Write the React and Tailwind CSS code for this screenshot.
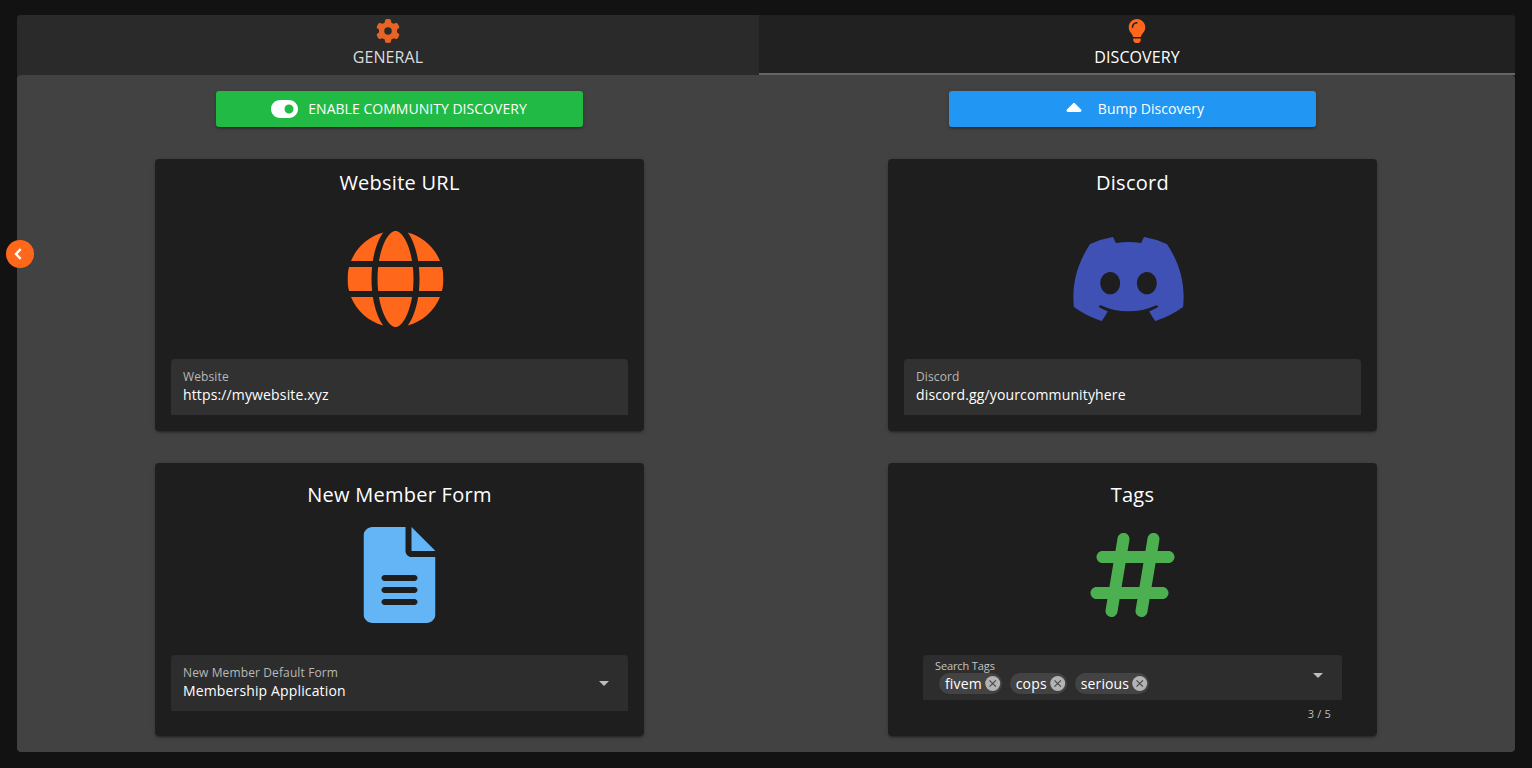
import {
  FaGear,
  FaToggleOn,
  FaCaretUp,
  FaDiscord,
  FaHashtag,
} from "react-icons/fa6";

const CARD_SHADOW =
  "shadow-[0_3px_1px_-2px_rgba(0,0,0,0.2),0_2px_2px_0_rgba(0,0,0,0.14),0_1px_5px_0_rgba(0,0,0,0.12)]";

function Globe() {
  return (
    <svg viewBox="0 0 512 512" className="size-24 -translate-x-[0.5px]" fill="currentColor">
      <path d="M352 256c0 22.200-1.200 43.600-3.300 64H163.300c-2.200-20.400-3.300-41.800-3.300-64s1.200-43.600 3.300-64h185.400c2.200 20.400 3.300 41.800 3.300 64zm28.800-64h123.100c5.300 20.500 8.100 41.900 8.100 64s-2.800 43.500-8.100 64H380.800c2.100-20.600 3.200-42 3.200-64s-1.100-43.400-3.200-64zm112.600-32H376.700c-10-63.900-29.800-117.400-55.300-151.600 78.300 20.700 142 77.500 171.900 151.600zm-149.100 0H167.700c6.100-36.400 15.500-68.600 27-94.700 10.500-23.600 22.200-40.700 33.500-51.500C239.400 3.200 248.700 0 256 0s16.600 3.200 27.800 13.800c11.300 10.800 23 27.900 33.500 51.500 11.600 26 20.900 58.200 27 94.700zm-209 0H18.600C48.600 85.900 112.200 29.100 190.600 8.400 165.100 42.600 145.300 96.100 135.300 160zM8.100 192h123.100c-2.100 20.600-3.200 42-3.200 64s1.100 43.400 3.200 64H8.100C2.800 299.500 0 278.100 0 256s2.800-43.500 8.100-64zm186.600 254.600c-11.600-26-20.900-58.200-27-94.600h176.600c-6.100 36.400-15.500 68.600-27 94.600-10.500 23.600-22.200 40.700-33.500 51.500C272.600 508.800 263.300 512 256 512s-16.600-3.200-27.800-13.800c-11.300-10.800-23-27.900-33.500-51.500zM135.300 352c10 63.900 29.800 117.400 55.300 151.600C112.200 482.900 48.600 426.100 18.600 352h116.700zm358.100 0c-30 74.100-93.600 130.900-171.900 151.600 25.500-34.200 45.200-87.700 55.300-151.600h116.600z" />
    </svg>
  );
}

function FileLines() {
  return (
    <svg viewBox="0 0 384 512" className="h-24 w-[72px] -translate-x-[0.5px]" fill="currentColor">
      <path
        fillRule="evenodd"
        d="M256 0v128h128L256 0zM224 128V0H48C21.490 0 0 21.490 0 48v416c0 26.500 21.490 48 48 48h288c26.510 0 48-21.490 48-48V160H256c-17.700 0-32-14.300-32-32zM272 416H112c-8.800 0-16-7.200-16-16s7.200-16 16-16h160c8.800 0 16 7.200 16 16s-7.200 16-16 16zM272 352H112c-8.800 0-16-7.200-16-16s7.200-16 16-16h160c8.800 0 16 7.200 16 16s-7.200 16-16 16zM288 272c0 8.800-7.200 16-16 16H112c-8.800 0-16-7.200-16-16s7.200-16 16-16h160c8.800 0 16 7.200 16 16z"
      />
    </svg>
  );
}

function Lightbulb() {
  return (
    <svg viewBox="0 0 384 512" className="h-6 w-[18px]" fill="#ff671b">
      <path d="M112.1 454.3c0 6.297 1.816 12.44 5.284 17.69l17.14 25.69c5.25 7.875 17.17 14.28 26.64 14.28h61.67c9.438 0 21.36-6.401 26.61-14.28l17.08-25.68c2.938-4.438 5.348-12.37 5.348-17.7L272 415.1h-160L112.1 454.3zM191.4 .0132C89.44 .3257 16 82.97 16 175.1c0 44.38 16.44 84.84 43.56 115.8c16.53 18.84 42.34 58.23 52.22 91.45c.0313 .25 .0938 .5166 .125 .7823h160.2c.0313-.2656 .0938-.5166 .125-.7823c9.875-33.22 35.69-72.61 52.22-91.45C351.6 260.8 368 220.4 368 175.1C368 78.61 288.9-.2837 191.4 .0132zM192 96.01c-44.13 0-79.1 35.89-79.1 79.1C112 184.8 104.8 192 96 192S80 184.8 80 176c0-61.76 50.25-111.1 112-111.1c8.844 0 16 7.159 16 16S200.8 96.01 192 96.01z" />
    </svg>
  );
}

function Caret() {
  return (
    <svg viewBox="0 0 10 5" className="h-[5px] w-[10px]" fill="#bdbdbd">
      <path d="M0 0h10L5 5z" />
    </svg>
  );
}

function Field({ label, value, select }) {
  return (
    <div
      className={`mx-4 flex h-14 items-center justify-between rounded-t-[4px] pr-[19px] pl-3 ${
        select ? "bg-[#2d2d2d]" : "bg-[#313131]"
      }`}
    >
      <div className="flex flex-col pb-[3px]">
        <span className="text-[12px] leading-[18px] tracking-[0.12px] text-[#b8b8b8]">{label}</span>
        <span className="text-[14px] leading-[18px] tracking-[0.14px] text-white">{value}</span>
      </div>
      {select && <Caret />}
    </div>
  );
}

function Card({ title, titleClass, height, children }) {
  return (
    <section className={`flex w-[489px] flex-col rounded-[4px] bg-[#1e1e1e] ${height} ${CARD_SHADOW}`}>
      <h2 className={`text-center text-[20px] leading-8 tracking-[0.25px] text-white ${titleClass}`}>{title}</h2>
      {children}
    </section>
  );
}

function Chip({ text }) {
  return (
    <span className="flex h-[21px] items-center gap-[3px] rounded-full bg-[#434343] pr-[1px] pl-[6px] text-[14px] leading-[20px] tracking-[0.14px] text-white">
      {text}
      <svg viewBox="0 0 16 16" className="size-4">
        <circle cx="7.700" cy="7.500" r="7.500" fill="#b3b3b3" />
        <path d="M4.500 4.300l6.400 6.400M10.900 4.300l-6.400 6.400" stroke="#444" strokeWidth="1.100" />
      </svg>
    </span>
  );
}

export default function App() {
  return (
    <div className="relative h-[768px] w-[1532px] overflow-hidden bg-[#121212] pt-[15px] pl-[17px] font-['Open_Sans','Noto_Sans',sans-serif]">
      <div className="flex h-[737px] w-[1498px] flex-col overflow-hidden rounded-[4px] bg-[#212121]">
        <nav className="flex h-[60px] shrink-0 text-[16px] leading-6 tracking-[0.1px]">
          <button className="flex w-[742px] flex-col items-center bg-[#2a2a2a] pt-1 text-[#dcdcdc]">
            <FaGear className="size-6 text-[#e86425]" />
            <span className="mt-[2px]">GENERAL</span>
          </button>
          <button className="flex w-[756px] flex-col items-center border-b-2 border-[#666] bg-[#212121] pt-1 text-white">
            <Lightbulb />
            <span className="mt-[2px]">DISCOVERY</span>
          </button>
        </nav>

        <main className="grid grow grid-cols-[733px_733px] grid-rows-[36px_272px_273px] content-start justify-items-center gap-y-8 rounded-[4px] bg-[#424242] p-4">
          <button className={`flex w-[367px] items-center justify-center gap-[10px] rounded-[3px] bg-[#21ba45] pr-px text-[14px] text-white ${CARD_SHADOW}`}>
            <FaToggleOn className="h-6 w-[27px]" />
            <span className="pb-[2px] tracking-[0.03px]">ENABLE COMMUNITY DISCOVERY</span>
          </button>
          <button className={`flex w-[367px] items-center justify-center gap-3 rounded-[3px] bg-[#2196f3] pl-px text-[14px] text-white ${CARD_SHADOW}`}>
            <FaCaretUp className="size-6" />
            <span className="pb-[2px] tracking-[0.03px]">Bump Discovery</span>
          </button>

          <Card title="Website URL" titleClass="mt-2" height="h-[272px]">
            <div className="mt-8 mb-8 flex justify-center pr-2 text-[#ff671b]">
              <Globe />
            </div>
            <Field label="Website" value="https://mywebsite.xyz" />
          </Card>
          <Card title="Discord" titleClass="mt-2" height="h-[272px]">
            <div className="mt-8 mb-8 flex justify-center pr-2 text-[#3f51b5]">
              <FaDiscord className="h-24 w-[120px] -translate-x-[0.5px]" />
            </div>
            <Field label="Discord" value="discord.gg/yourcommunityhere" />
          </Card>

          <Card title="New Member Form" titleClass="mt-4" height="h-[273px]">
            <div className="mt-4 mb-8 flex justify-center text-[#64b5f6]">
              <FileLines />
            </div>
            <Field label="New Member Default Form" value="Membership Application" select />
          </Card>
          <Card title="Tags" titleClass="mt-4" height="h-[273px]">
            <div className="mt-4 mb-8 flex justify-center text-[#4caf50]">
              <FaHashtag className="size-24 -translate-x-[0.5px]" />
            </div>
            <div className="mx-[35px] flex h-[45px] items-start justify-between rounded-t-[4px] bg-[#2d2d2d] pr-[19px] pl-3">
              <div className="flex flex-col pt-[3px]">
                <span className="text-[11px] leading-[15px] tracking-[-0.12px] text-[#c4c4c4]">Search Tags</span>
                <div className="ml-1 flex gap-2">
                  <Chip text="fivem" />
                  <Chip text="cops" />
                  <Chip text="serious" />
                </div>
              </div>
              <div className="mt-[18px]">
                <Caret />
              </div>
            </div>
            <div className="mt-[6px] mr-[46px] text-right text-[11px] leading-4 tracking-[0.2px] text-[#bdbdbd]">3 / 5</div>
          </Card>
        </main>
      </div>

      <button className="absolute top-[240px] left-[6px] flex size-7 items-center justify-center rounded-full bg-[#ff671b] pr-[5px] text-white">
        <svg viewBox="0 0 8 12" className="h-3 w-2" fill="none" stroke="currentColor" strokeWidth="2.400">
          <path d="M6.700 1.200L2 6l4.700 4.800" />
        </svg>
      </button>
    </div>
  );
}
